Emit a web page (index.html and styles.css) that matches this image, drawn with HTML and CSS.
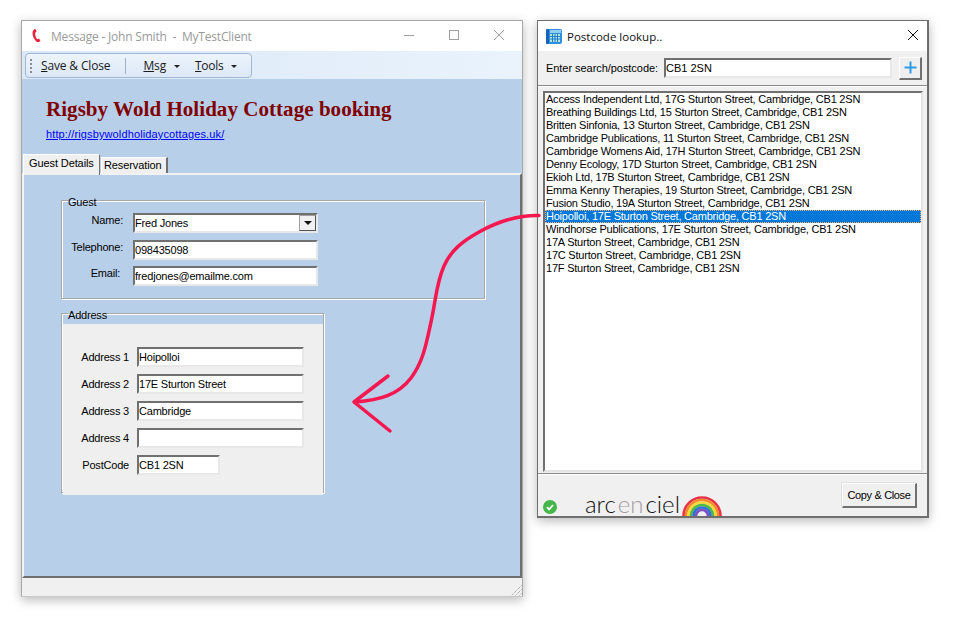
FILE: index.html
```html
<!DOCTYPE html>
<html lang="en">
<head>
<meta charset="utf-8">
<title>Postcode lookup</title>
<link rel="stylesheet" href="styles.css">
</head>
<body>
<section class="window window-message">
  <header class="titlebar">
    <svg class="phone" viewBox="0 0 10 16"><path d="M3.5 0.6 L5.2 3.4 L3.6 5 C3.2 7.5 4.2 10.5 5.8 12.2 L7.8 11.4 L9.4 14.2 L7 15.6 C3.5 14.8 0.6 9.5 0.6 5.2 C0.6 3.2 1.6 1.4 3.5 0.6Z" fill="#e8203f"/></svg>
    <span class="title-muted">Message - John Smith&nbsp; -&nbsp; MyTestClient</span>
    <div class="win-controls">
      <svg class="ctl" viewBox="0 0 12 12"><path d="M1 6.5H11" stroke="#a0a0a0" fill="none"/></svg>
      <svg class="ctl" viewBox="0 0 12 12"><rect x="1.5" y="1.5" width="9" height="9" stroke="#a0a0a0" fill="none"/></svg>
      <svg class="ctl" viewBox="0 0 12 12"><path d="M1 1L11 11M11 1L1 11" stroke="#a0a0a0" fill="none"/></svg>
    </div>
  </header>
  <div class="toolbar-band">
    <nav class="toolbar">
      <span class="grip"></span>
      <span class="tool tool-save"><u>S</u>ave &amp; Close</span>
      <span class="tool-sep"></span>
      <span class="tool tool-msg"><u>M</u>sg<i class="caret"></i></span>
      <span class="tool tool-tools"><u>T</u>ools<i class="caret"></i></span>
    </nav>
  </div>
  <div class="intro">
    <h1 class="heading">Rigsby Wold Holiday Cottage booking</h1>
    <a class="site-link" href="#">http://rigsbywoldholidaycottages.uk/</a>
  </div>
  <div class="tabs">
    <span class="tab tab-active">Guest Details</span>
    <span class="tab">Reservation</span>
  </div>
  <main class="pane">
    <fieldset class="group group-guest">
      <legend class="legend">Guest</legend>
      <div class="guest-grid">
        <span class="guest-label">Name:</span>
        <div class="field field-combo"><span>Fred Jones</span><span class="combo-btn"><i></i></span></div>
        <span class="guest-label">Telephone:</span>
        <div class="field">098435098</div>
        <span class="guest-label label-email">Email:</span>
        <div class="field">fredjones@emailme.com</div>
      </div>
    </fieldset>
    <fieldset class="group group-address">
      <legend class="legend">Address</legend>
      <div class="address-fill">
        <span class="addr-label">Address 1</span><div class="field">Hoipolloi</div>
        <span class="addr-label">Address 2</span><div class="field">17E Sturton Street</div>
        <span class="addr-label">Address 3</span><div class="field">Cambridge</div>
        <span class="addr-label">Address 4</span><div class="field"></div>
        <span class="addr-label">PostCode</span><div class="field field-short">CB1 2SN</div>
      </div>
    </fieldset>
  </main>
  <footer class="statusbar">
    <svg class="size-grip" viewBox="0 0 12 12"><path d="M11.5 1.5L1.5 11.5M11.5 5.5L5.5 11.5M11.5 9.5L9.5 11.5" stroke="#8a8a8a" stroke-dasharray="1 1" fill="none"/></svg>
  </footer>
</section>

<section class="window window-lookup">
  <header class="titlebar titlebar-lookup">
    <svg class="calc" viewBox="0 0 16 16">
      <rect x="0" y="1" width="16" height="15" rx="2" fill="#2f8fe0"/>
      <rect x="0" y="1" width="3" height="15" rx="1" fill="#1b62b8"/>
      <rect x="4" y="2" width="11" height="3" fill="#8fd0ef"/>
      <rect x="4" y="6" width="10" height="8" fill="#b9e6d4"/>
      <path d="M4 8.5H14M4 11H14M6.5 6V14M9 6V14M11.5 6V14" stroke="#1f7ecf" fill="none"/>
    </svg>
    <span class="lookup-title">Postcode lookup..</span>
    <svg class="ctl-close" viewBox="0 0 12 12"><path d="M1 1L11 11M11 1L1 11" stroke="#111" fill="none"/></svg>
  </header>
  <div class="search-row">
    <label class="search-label">Enter search/postcode:</label>
    <div class="field search-field">CB1 2SN</div>
    <span class="plus-btn"><svg viewBox="0 0 13 13"><path d="M6.5 0.5V12.5M0.5 6.5H12.5" stroke="#2f9be8" stroke-width="2" fill="none"/></svg></span>
  </div>
  <div class="list-wrap">
    <ul class="listbox">
      <li>Access Independent Ltd, 17G Sturton Street, Cambridge, CB1 2SN</li>
      <li>Breathing Buildings Ltd, 15 Sturton Street, Cambridge, CB1 2SN</li>
      <li>Britten Sinfonia, 13 Sturton Street, Cambridge, CB1 2SN</li>
      <li>Cambridge Publications, 11 Sturton Street, Cambridge, CB1 2SN</li>
      <li>Cambridge Womens Aid, 17H Sturton Street, Cambridge, CB1 2SN</li>
      <li>Denny Ecology, 17D Sturton Street, Cambridge, CB1 2SN</li>
      <li>Ekioh Ltd, 17B Sturton Street, Cambridge, CB1 2SN</li>
      <li>Emma Kenny Therapies, 19 Sturton Street, Cambridge, CB1 2SN</li>
      <li>Fusion Studio, 19A Sturton Street, Cambridge, CB1 2SN</li>
      <li class="selected">Hoipolloi, 17E Sturton Street, Cambridge, CB1 2SN</li>
      <li>Windhorse Publications, 17E Sturton Street, Cambridge, CB1 2SN</li>
      <li>17A Sturton Street, Cambridge, CB1 2SN</li>
      <li>17C Sturton Street, Cambridge, CB1 2SN</li>
      <li>17F Sturton Street, Cambridge, CB1 2SN</li>
    </ul>
  </div>
  <footer class="lookup-footer">
    <svg class="ok-icon" viewBox="0 0 14 14"><circle cx="7" cy="7" r="7" fill="#45b649"/><path d="M4 7.2L6.2 9.4L10 5" stroke="#fff" stroke-width="1.8" fill="none"/></svg>
    <div class="logo">
      <span class="logo-text">arc<span class="logo-en">en</span>ciel</span>
      <svg class="rainbow" viewBox="0 0 40 21">
        <g fill="none" stroke-width="2.6">
          <circle cx="20" cy="21" r="18.5" stroke="#e8324a"/>
          <circle cx="20" cy="21" r="16" stroke="#f28a2a"/>
          <circle cx="20" cy="21" r="13.5" stroke="#f4d93a"/>
          <circle cx="20" cy="21" r="11" stroke="#4fb848"/>
          <circle cx="20" cy="21" r="8.5" stroke="#2f6fd8"/>
          <circle cx="20" cy="21" r="6" stroke="#7d4fc0"/>
        </g>
      </svg>
    </div>
    <button class="copy-btn">Copy &amp; Close</button>
  </footer>
</section>

<svg class="arrow" viewBox="0 0 957 619">
  <path d="M539 215.5C516 215 497 222 479 232C463 241 451 250 444 266C436 284 436 300 431 322C426 345 423 362 411 378C398 395 380 400 355 402" fill="none" stroke="#f5174f" stroke-width="3.5" stroke-linecap="round"/>
  <path d="M388 376L354 402L390 431" fill="none" stroke="#f5174f" stroke-width="3.5" stroke-linecap="round" stroke-linejoin="round"/>
</svg>
</body>
</html>
```

FILE: styles.css
```css
* { box-sizing: border-box; }
html, body { margin: 0; padding: 0; }
body {
  position: relative;
  width: 957px;
  height: 619px;
  overflow: hidden;
  background: #fff;
  font-family: "Liberation Sans", Arial, sans-serif;
  font-size: 11px;
  letter-spacing: -.2px;
  color: #000;
}
.window {
  position: absolute;
  top: 20px;
  display: flex;
  flex-direction: column;
  background: #f0f0f0;
  box-shadow: 0 3px 10px rgba(0, 0, 0, .28);
}
.window-message { left: 21px; width: 502px; height: 577px; border: 1px solid #a8a8a8; border-bottom-color: #c8c8c8; }
.window-lookup { left: 537px; width: 392px; height: 498px; border: 1px solid #6e6e6e; border-width: 1px 2px 2px 1px; }

.titlebar {
  flex: none;
  height: 30px;
  display: flex;
  align-items: center;
  background: #fff;
  padding-left: 10px;
  font-family: "Open Sans", sans-serif;
  font-size: 12px;
}
.phone { width: 9px; height: 15px; flex: none; margin-bottom: 2px; }
.title-muted { margin-left: 10px; color: #9a9a9a; letter-spacing: -.2px; white-space: nowrap; }
.win-controls { margin-left: auto; display: flex; gap: 33px; padding-right: 17px; margin-bottom: 2px; }
.ctl { width: 12px; height: 12px; }

.toolbar-band {
  flex: none;
  height: 28px;
  padding: 2px 0 1px 3px;
  background: linear-gradient(90deg, #d9e7f7, #eaf3fc);
}
.toolbar {
  width: 227px;
  height: 25px;
  display: flex;
  align-items: center;
  border: 1px solid #9fb7d3;
  border-radius: 4px;
  background: linear-gradient(#edf4fc, #dce8f6);
  font-family: "Open Sans", sans-serif;
  font-size: 12px;
  color: #1a1a1a;
}
.grip { width: 2px; height: 14px; margin-left: 4px; border-left: 2px dotted #8c8c8c; }
.tool { white-space: nowrap; letter-spacing: -.15px; }
.tool-save { margin-left: 9px; }
.tool-sep { width: 1px; height: 16px; margin-left: 15px; background: #9fb0c6; }
.tool-msg { margin-left: 17px; }
.tool-tools { margin-left: 15px; letter-spacing: -.3px; }
.caret {
  display: inline-block;
  margin-left: 8px;
  vertical-align: 2px;
  border: 3px solid transparent;
  border-top: 3px solid #222;
  border-bottom: 0;
}

.intro {
  flex: none;
  height: 75px;
  padding: 18px 0 0 24px;
  background: #b8cfe9;
}
.heading {
  margin: 0;
  font-family: "Liberation Serif", serif;
  font-size: 21px;
  line-height: 25px;
  font-weight: 700;
  color: #800000;
  letter-spacing: .05px;
  white-space: nowrap;
}
.site-link { display: block; margin-top: 5px; color: #0000ff; line-height: 14px; letter-spacing: .13px; }

.tabs {
  flex: none;
  height: 19px;
  display: flex;
  align-items: flex-end;
  padding-left: 1px;
  background: #b8cfe9;
  position: relative;
  z-index: 1;
}
.tab {
  height: 16px;
  margin-left: 1px;
  padding: 0 4px 0 2px;
  line-height: 15px;
  background: #f0f0f0;
  border: 1px solid #fff;
  border-right: 2px solid #707070;
  border-bottom: 0;
  white-space: nowrap;
  letter-spacing: -.1px;
}
.tab-active {
  height: 21px;
  width: 77px;
  margin: 0 0 -2px;
  padding: 0 0 0 5px;
  line-height: 17px;
  border-right: 1px solid #707070;
}

.pane {
  flex: 1;
  min-height: 0;
  padding: 25px 0 0 37px;
  background: #b8cfe9;
  border: 1px solid #fff;
  border-width: 2px;
  border-color: #f2f2f2 #6e6e6e #6e6e6e #f2f2f2;
}
.group { margin: 0; padding: 0; border: 1px solid #a8a8a8; box-shadow: inset 1px 1px 0 #fff, 1px 1px 0 #fff; min-width: 0; }
.legend { margin-left: 6px; padding: 0; line-height: 11px; position: relative; top: 2px; }
.group-guest { width: 424px; height: 104px; margin-top: -5px; }
.guest-grid {
  display: grid;
  grid-template-columns: 63px 185px;
  grid-auto-rows: 20px;
  row-gap: 6.5px;
  column-gap: 8px;
  padding-top: 7px;
}
.guest-label { text-align: right; line-height: 14px; padding-right: 2px; }
.label-email { padding-right: 5px; }
.field {
  height: 20px;
  padding-left: 0;
  line-height: 17px;
  background: #fff;
  border: 2px solid;
  border-color: #707070 #e8e8e8 #e8e8e8 #707070;
  white-space: nowrap;
  overflow: hidden;
}
.field-combo { display: flex; justify-content: space-between; }
.combo-btn {
  width: 17px;
  height: 16px;
  display: flex;
  align-items: center;
  justify-content: center;
  background: #f0f0f0;
  border: 1px solid #a0a0a0;
  border-right-color: #555;
  border-bottom-color: #555;
}
.combo-btn i { border: 4px solid transparent; border-top: 4px solid #111; border-bottom: 0; }
.group-address { width: 263px; height: 185px; margin-top: 9px; }
.address-fill {
  height: 171px;
  margin: 5px 0 0 1px;
  padding: 23px 0 0 0;
  background: #efefef;
  display: grid;
  grid-template-columns: 66px 167px;
  grid-auto-rows: 20px;
  row-gap: 7px;
  column-gap: 8px;
  align-content: start;
}
.addr-label { text-align: right; line-height: 20px; }
.field-short { width: 83px; }

.statusbar { flex: none; height: 18px; position: relative; background: #f0f0f0; }
.size-grip { position: absolute; right: 0; bottom: 0; width: 12px; height: 12px; }

.titlebar-lookup { padding-left: 8px; }
.calc { width: 16px; height: 16px; flex: none; }
.lookup-title { margin-left: 5px; color: #111; font-size: 11.5px; letter-spacing: 0; white-space: nowrap; }
.ctl-close { width: 12px; height: 12px; margin-left: auto; margin-right: 8px; margin-bottom: 2px; }

.search-row {
  flex: none;
  height: 35px;
  display: flex;
  align-items: center;
  padding-left: 8px;
  border-bottom: 1px solid #8a8a8a;
  box-shadow: 0 1px 0 #fff;
}
.search-label { width: 118px; white-space: nowrap; letter-spacing: -.05px; }
.search-field { width: 228px; height: 20px; letter-spacing: 0; }
.plus-btn {
  width: 23px;
  height: 23px;
  margin-left: 7px;
  display: flex;
  align-items: center;
  justify-content: center;
  background: #efefef;
  border: 1px solid #fff;
  border-right: 2px solid #707070;
  border-bottom: 2px solid #707070;
}
.plus-btn svg { width: 13px; height: 13px; }
.list-wrap { flex: none; height: 388px; padding: 5px 4px 0 5px; border-bottom: 1px solid #8a8a8a; }
.listbox {
  list-style: none;
  margin: 0;
  padding: 0;
  height: 381px;
  background: #fff;
  border: 2px solid;
  border-color: #707070 #e4e4e4 #e4e4e4 #707070;
}
.listbox li { height: 13px; padding-left: 1px; line-height: 13px; white-space: nowrap; letter-spacing: -.22px; }
.listbox .selected { background: #0078d7; color: #fff; outline: 1px dotted #f0b070; outline-offset: -1px; }

.lookup-footer { flex: 1; min-height: 0; position: relative; display: flex; align-items: flex-end; border-top: 1px solid #fff; }
.ok-icon { width: 14px; height: 14px; margin: 0 0 2px 5px; flex: none; }
.logo { margin-left: 28px; display: flex; align-items: flex-end; height: 24px; }
.logo-text {
  font-family: "Lato", sans-serif;
  font-weight: 300;
  font-size: 24px;
  line-height: 24px;
  letter-spacing: 0;
  color: #111;
  white-space: nowrap;
}
.logo-en { color: #a89aa0; margin: 0 2px; }
.rainbow { width: 40px; height: 21px; margin-left: 2px; flex: none; }
.copy-btn {
  margin: 0 10px 8px auto;
  width: 75px;
  height: 25px;
  padding: 0;
  font: inherit;
  letter-spacing: -.35px;
  color: #000;
  background: #f0f0f0;
  border: 1px solid #fff;
  border-right: 2px solid #707070;
  border-bottom: 2px solid #707070;
  box-shadow: -1px -1px 0 #e0e0e0;
}
.arrow { position: absolute; left: 0; top: 0; width: 957px; height: 619px; pointer-events: none; }
```
